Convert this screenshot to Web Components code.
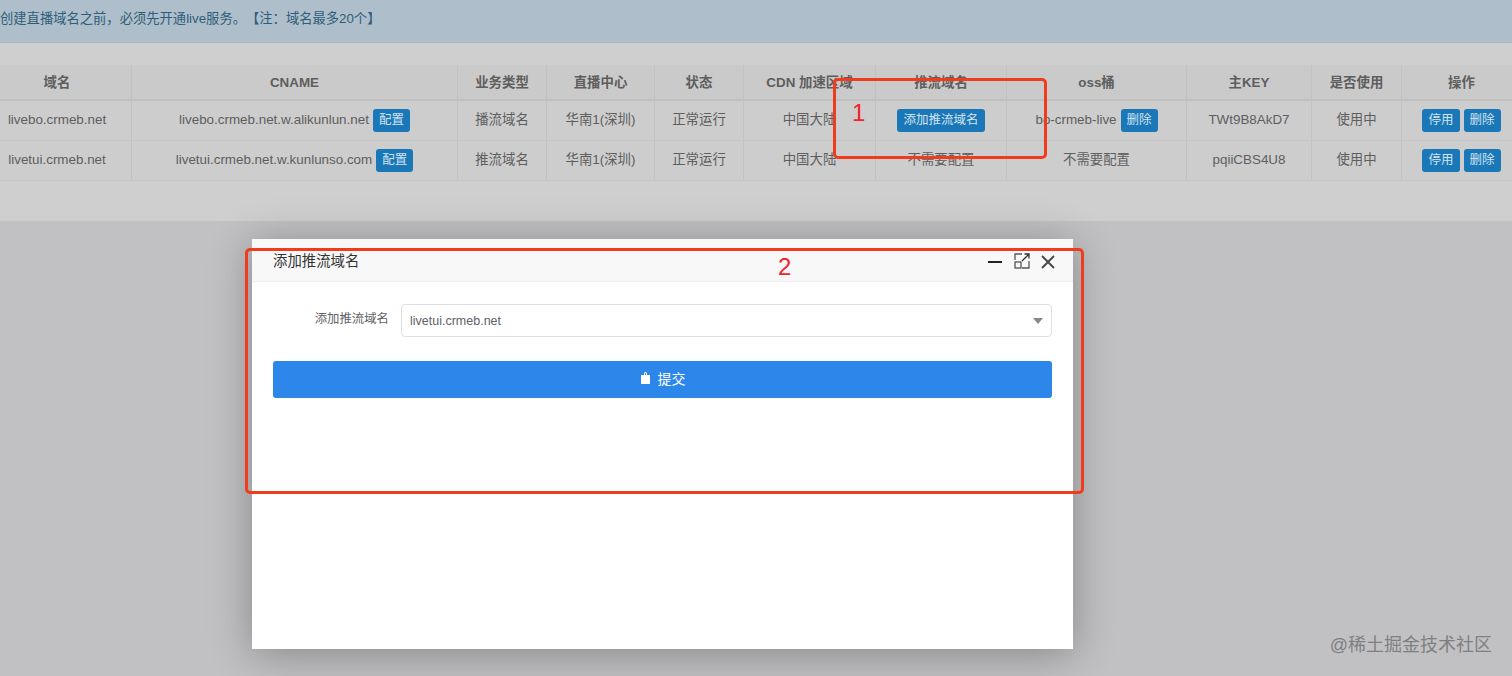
<!DOCTYPE html>
<html lang="zh">
<head>
<meta charset="utf-8">
<title>直播域名</title>
<style>
  html, body { margin: 0; height: 100%; }
  body {
    width: 1512px;
    height: 676px;
    overflow: hidden;
    position: relative;
    background: #c1c1c3;
    font-family: "Liberation Sans", "Noto Sans CJK SC", sans-serif;
    font-size: 13.4px;
    color: #5e5e5e;
    text-spacing-trim: space-all;
  }
</style>
</head>
<body>
  <live-alert>创建直播域名之前，必须先开通live服务。【注：域名最多20个】</live-alert>

  <live-panel>
    <live-row head>
      <span>域名</span><span>CNAME</span><span>业务类型</span><span>直播中心</span><span>状态</span><span>CDN 加速区域</span><span>推流域名</span><span>oss桶</span><span>主KEY</span><span>是否使用</span><span>操作</span>
    </live-row>
    <live-row>
      <span>livebo.crmeb.net</span>
      <span>livebo.crmeb.net.w.alikunlun.net <live-btn>配置</live-btn></span>
      <span>播流域名</span><span>华南1(深圳)</span><span>正常运行</span><span>中国大陆</span>
      <span><live-btn>添加推流域名</live-btn></span>
      <span>bo-crmeb-live <live-btn>删除</live-btn></span>
      <span>TWt9B8AkD7</span><span>使用中</span>
      <span><live-btn>停用</live-btn> <live-btn>删除</live-btn></span>
    </live-row>
    <live-row>
      <span>livetui.crmeb.net</span>
      <span>livetui.crmeb.net.w.kunlunso.com <live-btn>配置</live-btn></span>
      <span>推流域名</span><span>华南1(深圳)</span><span>正常运行</span><span>中国大陆</span>
      <span>不需要配置</span><span>不需要配置</span>
      <span>pqiiCBS4U8</span><span>使用中</span>
      <span><live-btn>停用</live-btn> <live-btn>删除</live-btn></span>
    </live-row>
  </live-panel>

  <live-dialog heading="添加推流域名">
    <live-select label="添加推流域名" value="livetui.crmeb.net"></live-select>
    <live-submit>提交</live-submit>
  </live-dialog>

  <live-mark number="1" style="left:833px;top:78px;width:208px;height:75px;--nx:16px;--ny:18px"></live-mark>
  <live-mark number="2" style="left:245px;top:248px;width:833px;height:240px;--nx:530px;--ny:2px"></live-mark>

  <live-watermark>@稀土掘金技术社区</live-watermark>

<script>
class LiveAlert extends HTMLElement {
  constructor() {
    super();
    this.attachShadow({ mode: "open" });
    this.shadowRoot.innerHTML = `
      <style>
        :host {
          display: block;
          height: 43px;
          box-sizing: border-box;
          padding: 10px 0 0 0;
          font-size: 13.3px;
          line-height: 17px;
          background: #aebfcb;
          border-bottom: 1px solid #a3b6c2;
          color: #2f5d78;
        }
      </style>
      <slot></slot>`;
  }
}

class LivePanel extends HTMLElement {
  constructor() {
    super();
    this.attachShadow({ mode: "open" });
    this.shadowRoot.innerHTML = `
      <style>
        :host {
          display: block;
          height: 178px;
          box-sizing: border-box;
          padding-top: 22px;
          background: #cfcfcf;
          overflow: hidden;
        }
        .table {
          width: 1539px;
          margin-left: -17px;
        }
      </style>
      <div class="table"><slot></slot></div>`;
  }
}

class LiveRow extends HTMLElement {
  constructor() {
    super();
    this.attachShadow({ mode: "open" });
    this.shadowRoot.innerHTML = `
      <style>
        :host {
          display: grid;
          grid-template-columns: 149px 326px 89px 108px 89px 132px 131px 180px 125px 90px 120px;
          height: 40px;
          line-height: 18px;
          background: #cdcdcd;
          border-bottom: 1px solid #c5c5c5;
          box-sizing: border-box;
        }
        :host([head]) {
          height: 36px;
          background: #cacaca;
          border-bottom: 2px solid #bfbfbf;
          font-weight: bold;
        }
        ::slotted(span) {
          display: flex;
          align-items: center;
          justify-content: center;
          gap: 4px;
          padding-bottom: 1px;
          white-space: nowrap;
          border-right: 1px solid #c2c2c2;
          box-sizing: border-box;
          min-width: 0;
        }
        :host([head]) ::slotted(span) { padding: 1px 0 0; }
      </style>
      <slot></slot>`;
  }
}

class LiveBtn extends HTMLElement {
  constructor() {
    super();
    this.attachShadow({ mode: "open" });
    this.shadowRoot.innerHTML = `
      <style>
        :host {
          display: inline-block;
          height: 23px;
          line-height: 23px;
          padding: 0 6px;
          font-size: 12.5px;
          font-weight: normal;
          color: #d3e3ef;
          background: #1a77b8;
          border-radius: 3px;
        }
      </style>
      <slot></slot>`;
  }
}

class LiveDialog extends HTMLElement {
  constructor() {
    super();
    this.attachShadow({ mode: "open" });
    this.shadowRoot.innerHTML = `
      <style>
        :host {
          position: absolute;
          left: 252px;
          top: 239px;
          width: 821px;
          height: 410px;
          background: #fff;
          box-shadow: 0 5px 40px rgba(0, 0, 0, .3);
          display: block;
        }
        header {
          height: 43px;
          box-sizing: border-box;
          background: #f8f8f8;
          border-bottom: 1px solid #eee;
          display: flex;
          align-items: center;
          padding: 0 15px 2px 21px;
          color: #333;
          font-size: 14.4px;
        }
        h2 { all: unset; flex: 1; }
        .tools { display: flex; align-items: center; height: 16px; margin-top: 6px; }
        .tools svg { display: block; }
        .max { margin: -3px 7px 0 10px; }
        .body { padding: 22px 21px 0; display: flex; flex-direction: column; gap: 24px; }
      </style>
      <header>
        <h2></h2>
        <div class="tools">
          <svg width="16" height="16" viewBox="0 0 16 16"><path d="M1 8h14" stroke="#222" stroke-width="2"/></svg>
          <svg class="max" width="18" height="18" viewBox="0 0 18 18" fill="none" stroke="#555" stroke-width="1.3">
            <path d="M9 2H2v6M9 16h7V9"/>
            <rect x="2" y="10" width="6" height="6"/>
            <path d="M9 9l7-7M11.500 2H16v4.500" stroke="#333"/>
          </svg>
          <svg width="20" height="16" viewBox="0 0 20 16"><path d="M4 2l12 12M16 2L4 14" stroke="#444" stroke-width="1.8"/></svg>
        </div>
      </header>
      <div class="body"><slot></slot></div>`;
  }
  connectedCallback() {
    this.shadowRoot.querySelector("h2").textContent = this.getAttribute("heading");
  }
}

class LiveSelect extends HTMLElement {
  constructor() {
    super();
    this.attachShadow({ mode: "open" });
    this.shadowRoot.innerHTML = `
      <style>
        :host { display: flex; align-items: center; gap: 12px; height: 33px; }
        label { width: 116px; text-align: right; font-size: 12.4px; color: #606266; line-height: 31px; align-self: flex-start; }
        .box {
          flex: 1;
          height: 33px;
          box-sizing: border-box;
          border: 1px solid #dcdfe6;
          border-radius: 4px;
          display: flex;
          align-items: center;
          justify-content: space-between;
          padding: 1px 8px 0 8px;
          color: #606266;
          font-size: 12.5px;
        }
        i { width: 0; height: 0; border: 5px solid transparent; border-top: 6px solid #888; border-bottom: 0; }
      </style>
      <label></label>
      <div class="box"><span></span><i></i></div>`;
  }
  connectedCallback() {
    this.shadowRoot.querySelector("label").textContent = this.getAttribute("label");
    this.shadowRoot.querySelector("span").textContent = this.getAttribute("value");
  }
}

class LiveSubmit extends HTMLElement {
  constructor() {
    super();
    this.attachShadow({ mode: "open" });
    this.shadowRoot.innerHTML = `
      <style>
        :host {
          display: flex;
          align-items: center;
          justify-content: center;
          gap: 7px;
          height: 37px;
          box-sizing: border-box;
          padding-bottom: 3px;
          background: #2d87ea;
          border-radius: 3px;
          color: #fff;
          font-size: 14px;
        }
        svg { display: block; }
      </style>
      <svg width="11" height="12" viewBox="0 0 11 12" fill="#fff"><path d="M1 3h3V1.500A1.500 1.500 0 0 1 7 1.500V3h3v9H1z M5 3h1V1.500a.5.5 0 0 0-1 0z" fill-rule="evenodd"/></svg>
      <slot></slot>`;
  }
}

// red hand-drawn boxes lying over the screenshot
class LiveMark extends HTMLElement {
  constructor() {
    super();
    this.attachShadow({ mode: "open" });
    this.shadowRoot.innerHTML = `
      <style>
        :host {
          position: absolute;
          display: block;
          border: 3px solid #f03c1c;
          border-radius: 5px;
          pointer-events: none;
        }
        b {
          position: absolute;
          left: var(--nx);
          top: var(--ny);
          font: normal 24px/28px "Liberation Sans", sans-serif;
          color: #f2222a;
        }
      </style>
      <b></b>`;
  }
  connectedCallback() {
    this.shadowRoot.querySelector("b").textContent = this.getAttribute("number");
  }
}

class LiveWatermark extends HTMLElement {
  constructor() {
    super();
    this.attachShadow({ mode: "open" });
    this.shadowRoot.innerHTML = `
      <style>
        :host {
          position: absolute;
          right: 20px;
          top: 634px;
          font-size: 18px;
          line-height: 22px;
          color: #7f7f81;
        }
      </style>
      <slot></slot>`;
  }
}

customElements.define("live-alert", LiveAlert);
customElements.define("live-panel", LivePanel);
customElements.define("live-row", LiveRow);
customElements.define("live-btn", LiveBtn);
customElements.define("live-dialog", LiveDialog);
customElements.define("live-select", LiveSelect);
customElements.define("live-submit", LiveSubmit);
customElements.define("live-mark", LiveMark);
customElements.define("live-watermark", LiveWatermark);
</script>
</body>
</html>
